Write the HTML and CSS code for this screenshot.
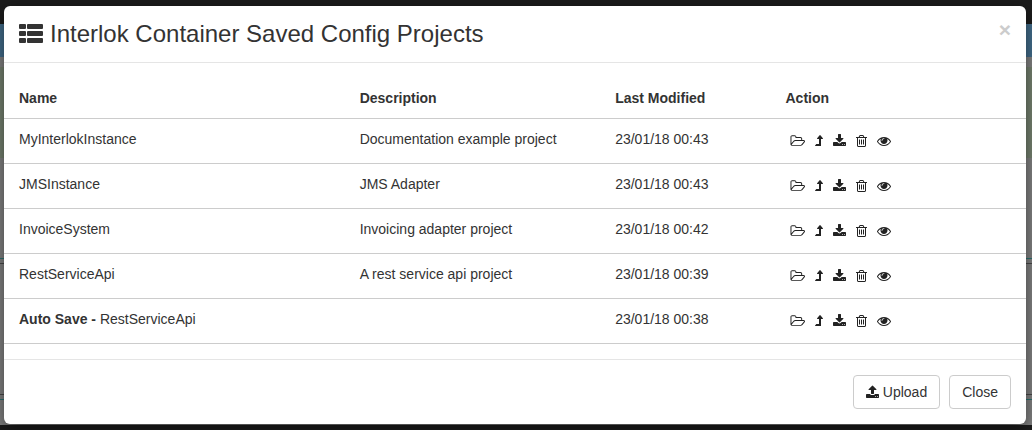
FILE: index.html
```html
<!DOCTYPE html>
<html lang="en">
<head>
<meta charset="utf-8">
<title>Interlok Container Saved Config Projects</title>
<link rel="stylesheet" href="styles.css">
</head>
<body>
<svg class="sprite" aria-hidden="true">
  <symbol id="folder" viewBox="0 0 1973 1792"><path d="M1845 931q0-35-53-35h-1088q-40 0-85.500 21.500t-71.500 52.500l-294 363q-18 24-18 40 0 35 53 35h1088q40 0 86-22t71-53l294-363q18-22 18-39zm-1141-163h768v-160q0-40-28-68t-68-28h-576q-40 0-68-28t-28-68v-64q0-40-28-68t-68-28h-320q-40 0-68 28t-28 68v853l256-315q44-53 116-87.500t140-34.500zm1269 163q0 62-46 120l-295 363q-43 53-116 87.500t-140 34.500h-1088q-92 0-158-66t-66-158v-960q0-92 66-158t158-66h320q92 0 158 66t66 158v32h544q92 0 158 66t66 158v160h192q54 0 99 24.500t67 70.500q15 32 15 68z"/></symbol>
  <symbol id="level-up" viewBox="0 0 1024 1792"><path d="M1011 603q-18 37-59 37h-184v864q0 14-9 23t-23 9h-704q-21 0-29-18-8-20 4-35l160-192q9-11 25-11h320v-640h-192q-40 0-58-37-17-37 9-68l320-384q18-22 49-22t49 22l320 384q27 32 9 68z"/></symbol>
  <symbol id="download" viewBox="0 0 1664 1792"><path d="M1280 1344q0-26-19-45t-45-19-45 19-19 45 19 45 45 19 45-19 19-45zm256 0q0-26-19-45t-45-19-45 19-19 45 19 45 45 19 45-19 19-45zm128-224v320q0 40-28 68t-68 28h-1472q-40 0-68-28t-28-68v-320q0-40 28-68t68-28h465l135 136q58 56 136 56t136-56l136-136h464q40 0 68 28t28 68zm-325-569q17 41-14 70l-448 448q-18 19-45 19t-45-19l-448-448q-31-29-14-70 17-39 59-39h256v-448q0-26 19-45t45-19h256q26 0 45 19t19 45v448h256q42 0 59 39z"/></symbol>
  <symbol id="trash" viewBox="192 0 1408 1792"><path d="M704 736v576q0 14-9 23t-23 9h-64q-14 0-23-9t-9-23v-576q0-14 9-23t23-9h64q14 0 23 9t9 23zm256 0v576q0 14-9 23t-23 9h-64q-14 0-23-9t-9-23v-576q0-14 9-23t23-9h64q14 0 23 9t9 23zm256 0v576q0 14-9 23t-23 9h-64q-14 0-23-9t-9-23v-576q0-14 9-23t23-9h64q14 0 23 9t9 23zm128 724v-948h-896v948q0 22 7 40.500t14.500 27 10.500 8.500h832q3 0 10.500-8.500t14.500-27 7-40.500zm-672-1076h448l-48-117q-7-9-17-11h-317q-10 2-17 11zm928 32v64q0 14-9 23t-23 9h-96v948q0 83-47 143.500t-113 60.500h-832q-66 0-113-58.500t-47-141.500v-952h-96q-14 0-23-9t-9-23v-64q0-14 9-23t23-9h309l70-167q15-37 54-63t79-26h320q40 0 79 26t54 63l70 167h309q14 0 23 9t9 23z"/></symbol>
  <symbol id="eye" viewBox="0 0 1792 1792"><path d="M1664 960q-152-236-381-353 61 104 61 225 0 185-131.500 316.500t-316.500 131.500-316.500-131.500-131.500-316.500q0-121 61-225-229 117-381 353 133 205 333.500 326.500t434.500 121.500 434.500-121.500 333.500-326.500zm-720-384q0-20-14-34t-34-14q-125 0-214.500 89.500t-89.500 214.500q0 20 14 34t34 14 34-14 14-34q0-86 61-147t147-61q20 0 34-14t14-34zm848 384q0 34-20 69-140 230-376.500 368.500t-499.500 138.500-499.500-139-376.500-368q-20-35-20-69t20-69q140-229 376.500-368t499.500-139 499.500 139 376.500 368q20 35 20 69z"/></symbol>
  <symbol id="upload" viewBox="0 0 1664 1792"><path d="M1280 1472q0-26-19-45t-45-19-45 19-19 45 19 45 45 19 45-19 19-45zm256 0q0-26-19-45t-45-19-45 19-19 45 19 45 45 19 45-19 19-45zm128-224v320q0 40-28 68t-68 28h-1472q-40 0-68-28t-28-68v-320q0-40 28-68t68-28h427q21 56 70.500 92t110.500 36h256q61 0 110.500-36t70.500-92h427q40 0 68 28t28 68zm-325-648q-17 40-59 40h-256v448q0 26-19 45t-45 19h-256q-26 0-45-19t-19-45v-448h-256q-42 0-59-40-17-39 14-69l448-448q18-19 45-19t45 19l448 448q31 30 14 69z"/></symbol>
  <symbol id="list" viewBox="0 0 24 20"><rect y="0" width="7" height="5" rx="1"/><rect y="7" width="7" height="5" rx="1"/><rect y="14" width="7" height="5" rx="1"/><rect x="8" y="0" width="16" height="5" rx="1"/><rect x="8" y="7" width="16" height="5" rx="1"/><rect x="8" y="14" width="16" height="5" rx="1"/></symbol>
</svg>
<div class="page">
  <main class="modal" role="dialog" aria-labelledby="title">
    <header class="modal-header">
      <svg class="title-icon" aria-hidden="true"><use href="#list"/></svg>
      <h1 id="title" class="title">Interlok Container Saved Config Projects</h1>
      <button class="dismiss" type="button" aria-label="Dismiss">×</button>
    </header>
    <div class="modal-body">
      <table class="projects">
        <colgroup><col class="col-name"><col class="col-desc"><col class="col-date"><col class="col-action"></colgroup>
        <thead><tr><th>Name</th><th>Description</th><th>Last Modified</th><th>Action</th></tr></thead>
        <tbody id="rows"></tbody>
      </table>
    </div>
    <footer class="modal-footer">
      <button class="btn" type="button"><svg class="icon w13" aria-hidden="true"><use href="#upload"/></svg>Upload</button>
      <button class="btn" type="button">Close</button>
    </footer>
  </main>
</div>
<script src="script.js"></script>
</body>
</html>
```
FILE: styles.css
```css
* { box-sizing: border-box; }
body {
  margin: 0;
  background: #181818;
  color: #333;
  font: 14px/20px "Liberation Sans", Arial, sans-serif;
}
button { font: inherit; color: inherit; cursor: pointer; }
.sprite { display: none; }
.page {
  min-height: 100vh;
  padding: 6px 6px 6px 4px;
  background:
    linear-gradient(#1c1c1c 24px, #426c8a 24px, #426c8a 57px, #808080 57px, #808080 67px,
      #74806f 67px, #74806f 158px, #808080 158px, #808080 258px, #2c7070 258px, #2c7070 259px,
      #808080 259px, #808080 263px, #484848 263px, #484848 264px, #808080 264px, #808080 394px,
      #484848 394px, #484848 395px, #808080 395px, #808080 399px, #2c7070 399px, #2c7070 400px,
      #808080 400px, #808080 425px, #1c1c1c 425px);
}
.modal {
  background: #fff;
  border-radius: 6px;
  box-shadow: 0 5px 15px rgba(0, 0, 0, .5);
}
.modal-header {
  display: flex;
  align-items: center;
  padding: 15px;
  border-bottom: 1px solid #e5e5e5;
}
.title-icon { width: 24px; height: 20px; margin-right: 7px; fill: #333; }
.title { flex: 1; margin: 0; font-size: 24px; font-weight: 400; line-height: 26px; }
.dismiss {
  align-self: flex-start;
  padding: 0;
  border: 0;
  background: none;
  color: #ccc;
  font-size: 21px;
  font-weight: 700;
  line-height: 18px;
}
.modal-body { padding: 15px 0; }
.projects { width: 100%; table-layout: fixed; border-collapse: collapse; }
.col-name { width: 33.333%; }
.col-desc { width: 25%; }
.col-date { width: 16.667%; }
.projects th, .projects td {
  padding: 10px 15px 14px;
  border-bottom: 1px solid #ccc;
  text-align: left;
  vertical-align: top;
}
.projects th { padding-bottom: 10px; }
.actions { display: flex; padding-top: 4px; }
.action { display: flex; padding: 1px 5px; border: 0; background: none; }
.icon { height: 14px; fill: #222; }
.w8 { width: 8px; }
.w11 { width: 11px; }
.w13 { width: 13px; }
.w14 { width: 14px; }
.w15 { width: 15px; }
.modal-footer {
  display: flex;
  justify-content: flex-end;
  gap: 9px;
  padding: 15px;
  border-top: 1px solid #e5e5e5;
}
.btn {
  display: flex;
  align-items: center;
  gap: 4px;
  padding: 6px 12px;
  border: 1px solid #ccc;
  border-radius: 4px;
  background: #fff;
}
```
FILE: script.js
```js
const projects = [
  ["MyInterlokInstance", "Documentation example project", "23/01/18 00:43"],
  ["JMSInstance", "JMS Adapter", "23/01/18 00:43"],
  ["InvoiceSystem", "Invoicing adapter project", "23/01/18 00:42"],
  ["RestServiceApi", "A rest service api project", "23/01/18 00:39"],
  ["<strong>Auto Save - </strong>RestServiceApi", "", "23/01/18 00:38"]
];
const actions = [
  ["folder", "Open", 15],
  ["level-up", "Apply", 8],
  ["download", "Download", 13],
  ["trash", "Delete", 11],
  ["eye", "View", 14]
];
const buttons = actions.map(([icon, label, width]) =>
  `<button class="action" type="button" aria-label="${label}"><svg class="icon w${width}" aria-hidden="true"><use href="#${icon}"/></svg></button>`
).join("");
document.getElementById("rows").innerHTML = projects.map(([name, desc, date]) =>
  `<tr><td>${name}</td><td>${desc}</td><td>${date}</td><td><div class="actions">${buttons}</div></td></tr>`
).join("");
```
